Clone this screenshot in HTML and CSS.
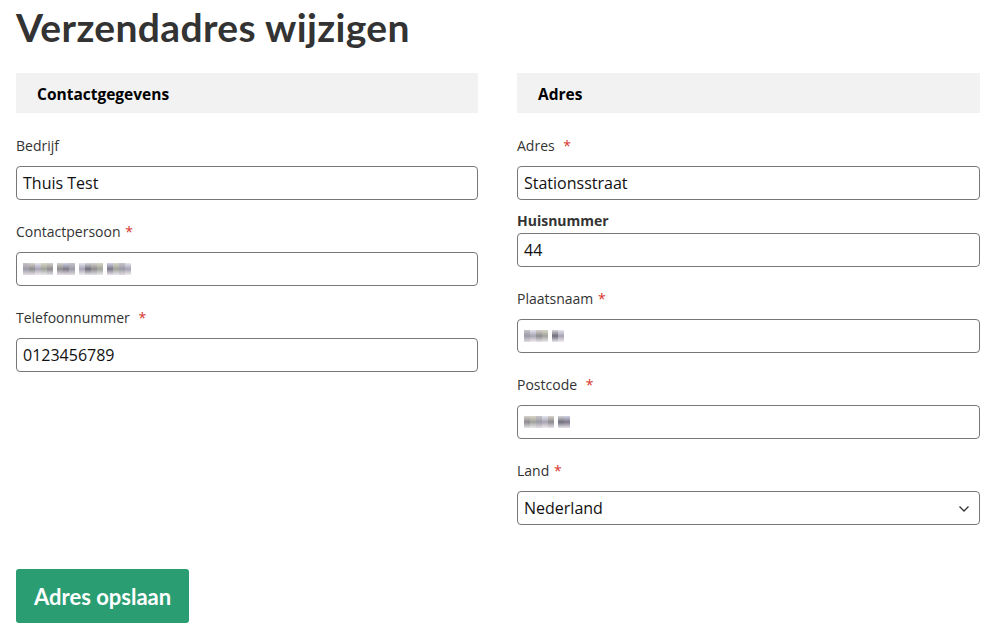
FILE: index.html
```html
<!DOCTYPE html>
<html lang="nl">
<head>
<meta charset="utf-8">
<title>Verzendadres wijzigen</title>
<link rel="stylesheet" href="styles.css">
</head>
<body>
<main class="page">
  <h1 class="title">Verzendadres wijzigen</h1>
  <form class="form">
    <div class="columns">
      <section class="col">
        <h2 class="section-head">Contactgegevens</h2>
        <div class="field">
          <label class="label">Bedrijf</label>
          <div class="input"><span class="value">Thuis Test</span></div>
        </div>
        <div class="field">
          <label class="label">Contactpersoon <span class="req">*</span></label>
          <div class="input">
            <span class="blur">
              <i class="px p1"></i><i class="px p2"></i><i class="px p3"></i><i class="px p4"></i><i class="px p2"></i><i class="gap"></i><i class="px p2"></i><i class="px p5"></i><i class="px p1"></i><i class="gap"></i><i class="px p3"></i><i class="px p6"></i><i class="px p2"></i><i class="px p4"></i><i class="gap"></i><i class="px p5"></i><i class="px p4"></i><i class="px p1"></i><i class="px p3"></i>
            </span>
          </div>
        </div>
        <div class="field">
          <label class="label">Telefoonnummer <span class="req wide">*</span></label>
          <div class="input"><span class="value">0123456789</span></div>
        </div>
      </section>
      <section class="col">
        <h2 class="section-head">Adres</h2>
        <div class="field">
          <label class="label">Adres <span class="req wide">*</span></label>
          <div class="input"><span class="value">Stationsstraat</span></div>
        </div>
        <div class="field field-tight">
          <label class="label label-bold">Huisnummer</label>
          <div class="input"><span class="value">44</span></div>
        </div>
        <div class="field">
          <label class="label">Plaatsnaam <span class="req">*</span></label>
          <div class="input">
            <span class="blur">
              <i class="px p1"></i><i class="px p3"></i><i class="px p2"></i><i class="px p4"></i><i class="gap"></i><i class="px p6"></i><i class="px p3"></i>
            </span>
          </div>
        </div>
        <div class="field">
          <label class="label">Postcode <span class="req wide">*</span></label>
          <div class="input">
            <span class="blur">
              <i class="px p2"></i><i class="px p4"></i><i class="px p1"></i><i class="px p3"></i><i class="px p2"></i><i class="gap"></i><i class="px p6"></i><i class="px p5"></i>
            </span>
          </div>
        </div>
        <div class="field">
          <label class="label">Land <span class="req">*</span></label>
          <div class="input select">
            <span class="value">Nederland</span>
            <svg class="chevron" width="12" height="8" viewBox="0 0 12 8" aria-hidden="true"><path d="M1.5 1.5 L6 6 L10.5 1.5" fill="none" stroke="#333" stroke-width="1.3"/></svg>
          </div>
        </div>
      </section>
    </div>
    <button type="button" class="btn">Adres opslaan</button>
  </form>
</main>
</body>
</html>
```
FILE: styles.css
```css
* { box-sizing: border-box; }
html, body { margin: 0; padding: 0; background: #fff; }
body { font-family: "Open Sans", "Noto Sans", sans-serif; color: #333; }
.page { padding: 0 13px 0 16px; }
.title {
  margin: 0;
  padding-top: 4px;
  height: 73px;
  font-family: "Lato", "Open Sans", sans-serif;
  font-weight: 700;
  font-size: 39px;
  line-height: 46px;
  color: #333;
  letter-spacing: 0.35px;
}
.columns {
  display: grid;
  grid-template-columns: 462px 1fr;
  column-gap: 39px;
}
.section-head {
  margin: 0 0 23px 0;
  height: 40px;
  background: #f2f2f2;
  padding: 0 21px;
  font-size: 15.5px;
  font-weight: 700;
  line-height: 42px;
  color: #000;
}
.field { margin-bottom: 22px; }
.label {
  display: block;
  font-size: 14px;
  line-height: 20px;
  margin-bottom: 10px;
  color: #333;
}
.field-tight { margin-top: -11px; }
.label-bold { font-weight: 700; margin-bottom: 2px; }
.req { color: #d9342b; margin-left: 1px; }
.req.wide { margin-left: 5px; }
.input {
  position: relative;
  height: 34px;
  border: 1px solid #777;
  border-radius: 4px;
  padding: 0 6px;
  display: flex;
  align-items: center;
  font-size: 16px;
  color: #111;
}
.value { line-height: 20px; }
.select { padding-right: 30px; }
.chevron { position: absolute; right: 9px; top: 13px; }
.blur { display: flex; align-items: center; height: 14px; }
.px { display: inline-block; width: 6px; height: 12px; }
.gap { display: inline-block; width: 4px; }
.p1 { background: linear-gradient(#c9c3c9, #9a9aa6 50%, #e4dde2); }
.p2 { background: linear-gradient(#d8d2cc, #8d8b8f 50%, #e6e2e9); }
.p3 { background: linear-gradient(#e3e6ef, #a8a3b4 50%, #f1ecec); }
.p4 { background: linear-gradient(#d9d6c8, #9fa39a 50%, #ece9ef); }
.p5 { background: linear-gradient(#cfd4e6, #7c7788 50%, #e9e3ea); }
.p6 { background: linear-gradient(#d4d4d8, #6f6d7a 50%, #e6e6ec); }
.btn {
  display: block;
  margin-top: 22px;
  height: 54px;
  padding: 0 18px;
  background: #2a9d73;
  color: #fff;
  border: 0;
  border-radius: 3px;
  font-family: "Lato", "Open Sans", sans-serif;
  font-weight: 700;
  font-size: 22px;
  cursor: pointer;
}
```
